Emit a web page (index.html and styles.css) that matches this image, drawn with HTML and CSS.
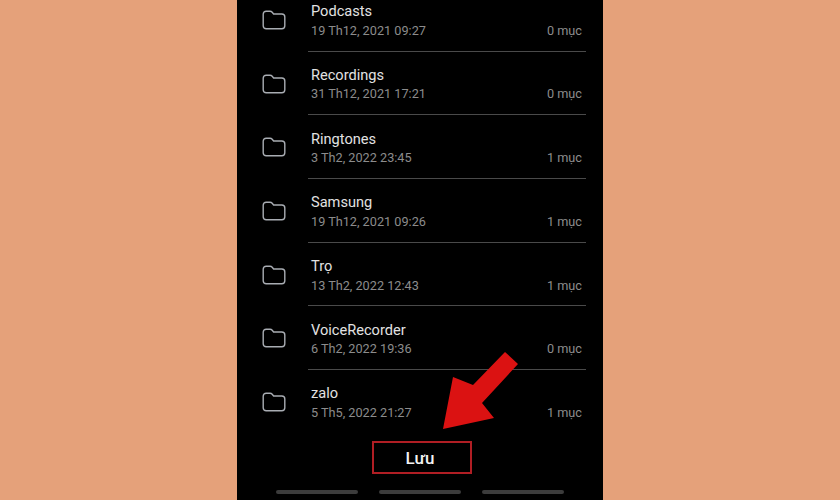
FILE: index.html
```html
<!DOCTYPE html>
<html lang="vi">
<head>
<meta charset="utf-8">
<title>Lưu</title>
<link rel="stylesheet" href="styles.css">
</head>
<body>
<svg class="defs" width="0" height="0" aria-hidden="true">
  <symbol id="folder" viewBox="0 0 24 20">
    <path d="M1.2 4.2C1.2 2.4 2.4 1.2 4.2 1.2H8C9 1.2 9.6 1.5 10.2 2.2L11.6 4H19.8C21.6 4 22.8 5.2 22.8 7V15.8C22.8 17.6 21.6 18.8 19.8 18.8H4.2C2.4 18.8 1.2 17.6 1.2 15.8Z" fill="none" stroke="currentColor" stroke-width="1.4" stroke-linejoin="round"/>
  </symbol>
</svg>
<main class="phone">
  <ul class="list">
    <li class="row"><svg class="icon"><use href="#folder"/></svg><div class="body"><div class="name">Podcasts</div><div class="meta"><span>19 Th12, 2021 09:27</span><span>0 mục</span></div></div></li>
    <li class="row"><svg class="icon"><use href="#folder"/></svg><div class="body"><div class="name">Recordings</div><div class="meta"><span>31 Th12, 2021 17:21</span><span>0 mục</span></div></div></li>
    <li class="row"><svg class="icon"><use href="#folder"/></svg><div class="body"><div class="name">Ringtones</div><div class="meta"><span>3 Th2, 2022 23:45</span><span>1 mục</span></div></div></li>
    <li class="row"><svg class="icon"><use href="#folder"/></svg><div class="body"><div class="name">Samsung</div><div class="meta"><span>19 Th12, 2021 09:26</span><span>1 mục</span></div></div></li>
    <li class="row"><svg class="icon"><use href="#folder"/></svg><div class="body"><div class="name">Trọ</div><div class="meta"><span>13 Th2, 2022 12:43</span><span>1 mục</span></div></div></li>
    <li class="row"><svg class="icon"><use href="#folder"/></svg><div class="body"><div class="name">VoiceRecorder</div><div class="meta"><span>6 Th2, 2022 19:36</span><span>0 mục</span></div></div></li>
    <li class="row last"><svg class="icon"><use href="#folder"/></svg><div class="body"><div class="name">zalo</div><div class="meta"><span>5 Th5, 2022 21:27</span><span>1 mục</span></div></div></li>
  </ul>
  <div class="action"><button class="save">Lưu</button></div>
  <div class="nav"><i></i><i></i><i></i></div>
  <svg class="arrow" viewBox="0 0 80 80" width="80" height="80" aria-hidden="true">
    <path d="M3 77L13 25L33 33L65 0L78 12L42 51L54 66Z" fill="#DB1212"/>
  </svg>
</main>
</body>
</html>
```
FILE: styles.css
```css
* { box-sizing: border-box; }
html, body { margin: 0; height: 100%; }
body {
  background: #E5A17A;
  display: flex;
  justify-content: center;
  overflow: hidden;
  font-family: Roboto, "Noto Sans", sans-serif;
}
.defs { position: absolute; }
.phone {
  position: relative;
  width: 366px;
  height: 500px;
  background: #000;
  overflow: hidden;
  display: flex;
  flex-direction: column;
}
.list {
  list-style: none;
  margin: -12px 0 0;
  padding: 0;
}
.row {
  height: 63.7px;
  display: flex;
  align-items: stretch;
  padding-left: 25px;
  padding-right: 17px;
}
.icon {
  width: 24px;
  height: 20px;
  color: #A9ADB3;
  margin-top: 22px;
  margin-right: 22px;
  flex: none;
}
.body {
  flex: 1;
  padding: 14.2px 4px 0 3px;
  border-bottom: 1px solid #4A4A4A;
}
.last .body { border-bottom: 0; }
.name {
  font-size: 14.6px;
  line-height: 19.6px;
  color: #E2E2E2;
}
.meta {
  display: flex;
  justify-content: space-between;
  font-size: 12.7px;
  line-height: 17px;
  color: #8C8C8C;
}
.action {
  display: flex;
  justify-content: center;
  margin-top: 7px;
  padding-left: 4px;
}
.save {
  width: 100px;
  height: 33px;
  background: #000;
  border: 2.5px solid #B01E24;
  color: #F2F2F2;
  font: 500 17px Roboto, sans-serif;
  padding: 2px 4px 0 0;
}
.nav {
  display: flex;
  justify-content: center;
  gap: 21px;
  margin-top: 16px;
  padding-right: 1px;
}
.nav i {
  width: 82px;
  height: 4px;
  border-radius: 2px;
  background: #3C3C3C;
}
.arrow {
  position: absolute;
  left: 203px;
  top: 352px;
}
```
